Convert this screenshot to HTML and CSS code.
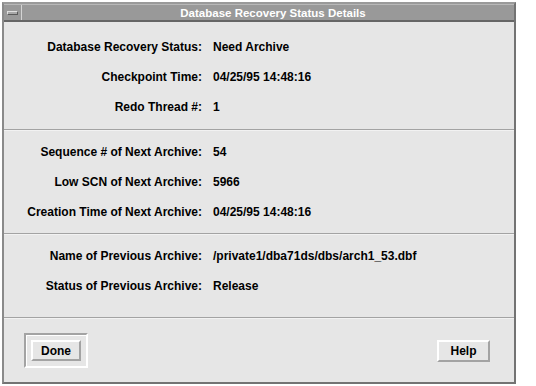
FILE: index.html
```html
<!DOCTYPE html>
<html lang="en">
<head>
    <meta charset="UTF-8">
    <title>Database Recovery Status Details</title>
    <link rel="stylesheet" href="styles.css">
</head>
<body>
    <div class="window">
        <div class="titlebar">
            <div class="menu-btn"><span></span></div>
            <div class="title">Database Recovery Status Details</div>
        </div>

        <div class="group first">
            <div class="row"><span class="label">Database Recovery Status:</span><span class="value">Need Archive</span></div>
            <div class="row"><span class="label">Checkpoint Time:</span><span class="value">04/25/95 14:48:16</span></div>
            <div class="row"><span class="label">Redo Thread #:</span><span class="value">1</span></div>
        </div>
        <div class="sep"></div>

        <div class="group">
            <div class="row"><span class="label">Sequence # of Next Archive:</span><span class="value">54</span></div>
            <div class="row"><span class="label">Low SCN of Next Archive:</span><span class="value">5966</span></div>
            <div class="row"><span class="label">Creation Time of Next Archive:</span><span class="value">04/25/95 14:48:16</span></div>
        </div>
        <div class="sep"></div>

        <div class="group last">
            <div class="row"><span class="label">Name of Previous Archive:</span><span class="value">/private1/dba71ds/dbs/arch1_53.dbf</span></div>
            <div class="row"><span class="label">Status of Previous Archive:</span><span class="value">Release</span></div>
        </div>
        <div class="sep"></div>

        <div class="buttons">
            <div class="default-ring"><button>Done</button></div>
            <button class="help">Help</button>
        </div>
    </div>
</body>
</html>
```

FILE: styles.css
```css
:root {
    --face: #e6e6e6;
    --title-bg: #999999;
    --frame: #737373;
    --shadow: #a3a3a3;
    --light: #ffffff;
    --text: #000000;
}

body {
    margin: 0;
    background: white;
    font-family: "Liberation Sans", Arial, sans-serif;
}

.window {
    margin: 2px;
    width: 510px;
    height: 378px;
    border: 2px solid var(--frame);
    border-top-color: #9a9a9a;
    border-left-color: #8a8a8a;
    background: var(--face);
    display: flex;
    flex-direction: column;
}

.titlebar {
    height: 15px;
    background: var(--title-bg);
    border-top: 1px solid #b8b8b8;
    border-bottom: 2px solid #666666;
    display: flex;
    align-items: center;
}

.menu-btn {
    width: 17px;
    height: 15px;
    border-right: 1px solid #d4d4d4;
    display: flex;
    align-items: center;
    justify-content: center;
}

.menu-btn span {
    width: 9px;
    height: 2px;
    border-top: 1px solid #e0e0e0;
    border-left: 1px solid #e0e0e0;
    border-bottom: 1px solid #5a5a5a;
    border-right: 1px solid #5a5a5a;
    background: #a8a8a8;
}

.title {
    flex: 1;
    text-align: center;
    color: white;
    font-weight: bold;
    font-size: 11.5px;
    padding-left: 10px;
}

.group {
    padding: 6px 0;
}

.group.first {
    padding: 10px 0 7px;
}

.group.last {
    padding-bottom: 16px;
}

.row {
    height: 30px;
    display: flex;
    align-items: center;
    font-size: 12px;
    font-weight: bold;
    color: var(--text);
}

.label {
    width: 198px;
    text-align: right;
}

.value {
    padding-left: 11px;
}

.sep {
    height: 1px;
    background: var(--shadow);
    border-bottom: 1px solid #f2f2f2;
}

.buttons {
    flex: 1;
    display: flex;
    justify-content: space-between;
    align-items: center;
    padding: 0 24px 0 20px;
}

.default-ring {
    padding: 5px;
    border: 2px solid var(--shadow);
    border-right-color: var(--light);
    border-bottom-color: var(--light);
    box-shadow: inset 1px 1px 0 var(--light);
}

button {
    font-family: "Liberation Sans", Arial, sans-serif;
    font-size: 12px;
    font-weight: bold;
    color: var(--text);
    background: var(--face);
    width: 50px;
    height: 21px;
    padding: 0;
    border: 2px solid var(--light);
    border-right-color: var(--shadow);
    border-bottom-color: var(--shadow);
}

.help {
    width: 53px;
    height: 22px;
}
```
